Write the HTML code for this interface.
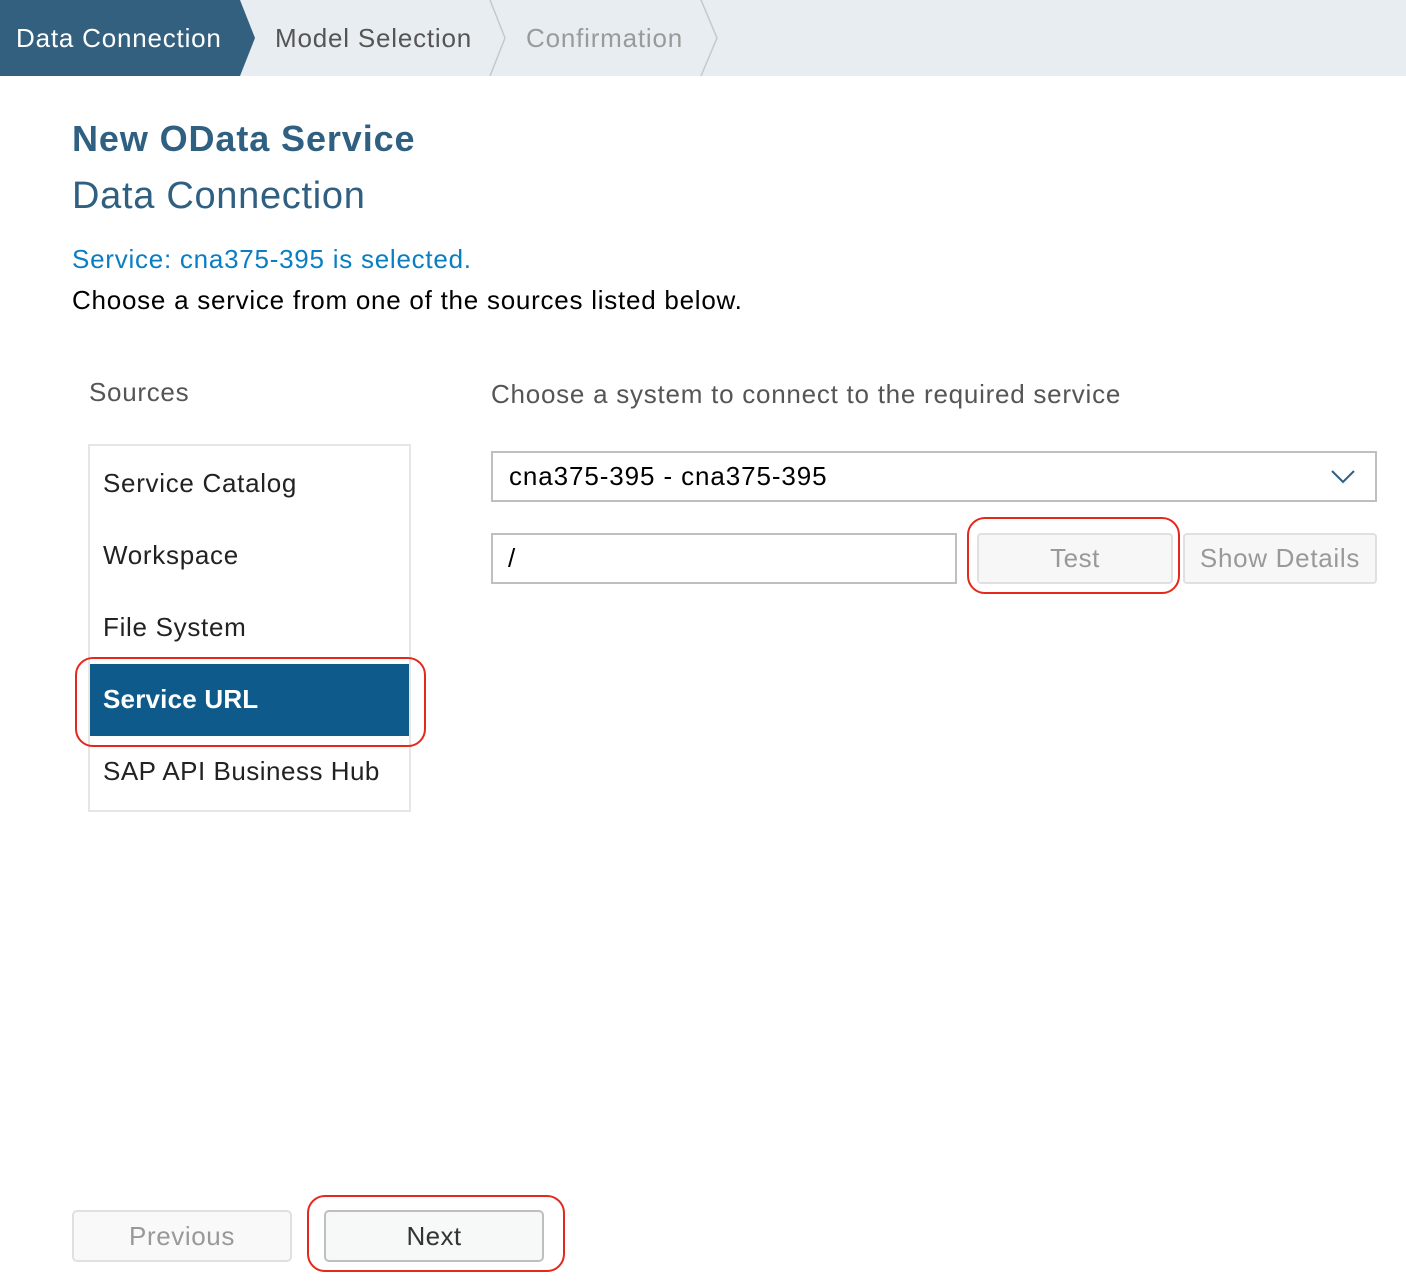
<!DOCTYPE html>
<html><head><meta charset="utf-8"><style>
body{margin:0;width:1406px;height:1284px;background:#fff;font-family:"Liberation Sans",sans-serif;position:relative;overflow:hidden}
.a{position:absolute;white-space:nowrap}
.t{position:absolute;line-height:1;white-space:nowrap}
.box{position:absolute;box-sizing:border-box}
.red{position:absolute;box-sizing:border-box;border:2px solid #e5281c;border-radius:18px}
</style></head><body>
<svg class="a" style="left:0;top:0" width="1406" height="76">
<rect width="1406" height="76" fill="#e8edf1"/>
<polygon points="0,0 240,0 255,38 240,76 0,76" fill="#34607f"/>
<polyline points="490,0 505,38 490,76" fill="none" stroke="#c4c9ce" stroke-width="1.5"/>
<polyline points="701,0 717,38 701,76" fill="none" stroke="#c4c9ce" stroke-width="1.5"/>
</svg>
<div class="t" style="left:16px;top:25px;font-size:26px;color:#fff;letter-spacing:0.8px">Data Connection</div>
<div class="t" style="left:275px;top:25px;font-size:26px;color:#555;letter-spacing:0.8px">Model Selection</div>
<div class="t" style="left:526px;top:25px;font-size:26px;color:#9a9a9a;letter-spacing:0.8px">Confirmation</div>

<div class="t" style="left:72px;top:121px;font-size:36px;font-weight:bold;color:#2f5f81;letter-spacing:0.9px">New OData Service</div>
<div class="t" style="left:72px;top:177px;font-size:38px;color:#2f5f81;letter-spacing:0.7px">Data Connection</div>
<div class="t" style="left:72px;top:246px;font-size:26px;color:#0a7ec2;letter-spacing:0.75px">Service: cna375-395 is selected.</div>
<div class="t" style="left:72px;top:287px;font-size:26px;color:#000;letter-spacing:0.75px">Choose a service from one of the sources listed below.</div>

<div class="t" style="left:89px;top:379px;font-size:26px;color:#555;letter-spacing:0.7px">Sources</div>
<div class="t" style="left:491px;top:381px;font-size:26px;color:#555;letter-spacing:0.75px">Choose a system to connect to the required service</div>

<div class="box" style="left:88px;top:444px;width:323px;height:368px;border:2px solid #e6e6e3"></div>
<div class="box" style="left:90px;top:664px;width:319px;height:72px;background:#0e5a8a"></div>
<div class="t" style="left:103px;top:470px;font-size:26px;color:#222;letter-spacing:0.7px">Service Catalog</div>
<div class="t" style="left:103px;top:542px;font-size:26px;color:#222;letter-spacing:0.7px">Workspace</div>
<div class="t" style="left:103px;top:614px;font-size:26px;color:#222;letter-spacing:0.7px">File System</div>
<div class="t" style="left:103px;top:686px;font-size:26px;color:#fff;font-weight:bold;letter-spacing:0.2px">Service URL</div>
<div class="t" style="left:103px;top:758px;font-size:26px;color:#222;letter-spacing:0.5px">SAP API Business Hub</div>
<div class="red" style="left:75px;top:657px;width:351px;height:90px"></div>

<div class="box" style="left:491px;top:451px;width:886px;height:51px;border:2px solid #bfbfbf"></div>
<div class="t" style="left:509px;top:463px;font-size:26px;color:#000;letter-spacing:0.9px">cna375-395 - cna375-395</div>
<svg class="a" style="left:1330px;top:468px" width="28" height="18"><polyline points="2,3 13,14 24,3" fill="none" stroke="#2f5f81" stroke-width="2"/></svg>

<div class="box" style="left:491px;top:533px;width:466px;height:51px;border:2px solid #bfbfbf"></div>
<div class="t" style="left:508px;top:545px;font-size:26px;color:#000">/</div>
<div class="box" style="left:977px;top:533px;width:196px;height:51px;border:2px solid #e0e0e0;border-radius:4px;background:#f7f7f7"></div>
<div class="t" style="left:977px;width:196px;text-align:center;top:545px;font-size:26px;color:#999;letter-spacing:0.5px">Test</div>
<div class="box" style="left:1183px;top:533px;width:194px;height:51px;border:2px solid #e0e0e0;border-radius:4px;background:#f7f7f7"></div>
<div class="t" style="left:1183px;width:194px;text-align:center;top:545px;font-size:26px;color:#999;letter-spacing:0.7px">Show Details</div>
<div class="red" style="left:967px;top:517px;width:213px;height:77px"></div>

<div class="box" style="left:72px;top:1210px;width:220px;height:52px;border:2px solid #e0e0e0;border-radius:5px;background:#f9f9f9"></div>
<div class="t" style="left:72px;width:220px;text-align:center;top:1223px;font-size:26px;color:#999;letter-spacing:0.6px">Previous</div>
<div class="box" style="left:324px;top:1210px;width:220px;height:52px;border:2px solid #bfbfbf;border-radius:5px;background:#f7f8f8"></div>
<div class="t" style="left:324px;width:220px;text-align:center;top:1223px;font-size:26px;color:#333;letter-spacing:0.4px">Next</div>
<div class="red" style="left:307px;top:1195px;width:258px;height:77px"></div>
</body></html>
